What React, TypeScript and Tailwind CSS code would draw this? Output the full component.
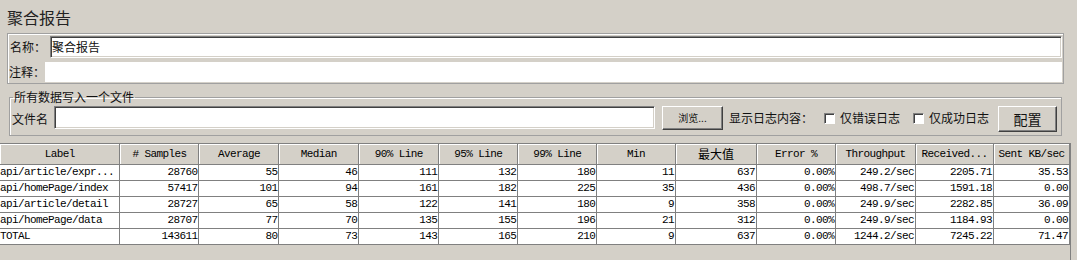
const cols = [
  { name: "Label", w: 120 },
  { name: "# Samples", w: 79 },
  { name: "Average", w: 80 },
  { name: "Median", w: 80 },
  { name: "90% Line", w: 80 },
  { name: "95% Line", w: 79 },
  { name: "99% Line", w: 79 },
  { name: "Min", w: 79 },
  { name: "最大值", w: 81 },
  { name: "Error %", w: 79 },
  { name: "Throughput", w: 80 },
  { name: "Received...", w: 78 },
  { name: "Sent KB/sec", w: 76 },
];

const rows = [
  ["api/article/expr...", "28760", "55", "46", "111", "132", "180", "11", "637", "0.00%", "249.2/sec", "2205.71", "35.53"],
  ["api/homePage/index", "57417", "101", "94", "161", "182", "225", "35", "436", "0.00%", "498.7/sec", "1591.18", "0.00"],
  ["api/article/detail", "28727", "65", "58", "122", "141", "180", "9", "358", "0.00%", "249.9/sec", "2282.85", "36.09"],
  ["api/homePage/data", "28707", "77", "70", "135", "155", "196", "21", "312", "0.00%", "249.9/sec", "1184.93", "0.00"],
  ["TOTAL", "143611", "80", "73", "143", "165", "210", "9", "637", "0.00%", "1244.2/sec", "7245.22", "71.47"],
];

const sunken =
  "border border-[#808080] border-b-white border-r-white bg-white shadow-[inset_1px_1px_0_#404040,inset_-1px_-1px_0_#d4d0c8]";
const raised =
  "border border-white border-b-[#404040] border-r-[#404040] bg-[#d4d0c8] shadow-[inset_-1px_-1px_0_#808080]";

const CheckBox = ({ label }: { label: string }) => (
  <div className="flex items-center">
    <div className="w-[11px] h-[11px] bg-white border border-[#808080] border-b-white border-r-white shadow-[inset_1px_1px_0_#404040]" />
    <span className="ml-[5px]">{label}</span>
  </div>
);

export default function App() {
  return (
    <div className="w-[1077px] h-[260px] overflow-hidden bg-[#d4d0c8] text-[12px] leading-[14px] text-[#111] font-['Noto_Sans_CJK_SC',sans-serif]">
      <div className="h-[33px] pl-[7px] pt-[7px] text-[16px] leading-[20px] text-[#222]">聚合报告</div>

      <div className="ml-[7px] w-[1057px] h-[51px] border border-[#a0a0a0] shadow-[inset_1px_1px_0_#fff] flex flex-col">
        <div className="flex items-center mt-[1px] h-[23px]">
          <span className="w-[42px] shrink-0 whitespace-nowrap pl-[2px]">名称：</span>
          <div className={`${sunken} w-[1012px] h-[22px] flex items-center pl-[1px]`}>聚合报告</div>
        </div>
        <div className="flex items-center mt-[4px] h-[20px]">
          <span className="w-[37px] shrink-0 whitespace-nowrap pl-[1px]">注释：</span>
          <div className="w-[1017px] h-[20px] bg-white" />
        </div>
      </div>

      <fieldset className="ml-[9px] mt-[6px] w-[1053px] h-[46px] border border-[#a0a0a0] shadow-[inset_1px_1px_0_#fff] px-[2px]">
        <legend className="ml-[1px] px-[1px] leading-[14px]">所有数据写入一个文件</legend>
        <div className="flex items-start mt-[2px]">
          <span className="w-[42px] shrink-0 mt-[6px]">文件名</span>
          <div className={`${sunken} w-[601px] h-[23px]`} />
          <button className={`${raised} ml-[7px] w-[61px] h-[24px] text-[10px] leading-[12px]`}>浏览...</button>
          <div className="flex items-center h-[24px] ml-[6px] whitespace-nowrap">
            <span>显示日志内容：</span>
            <div className="ml-[11px]">
              <CheckBox label="仅错误日志" />
            </div>
            <div className="ml-[13px]">
              <CheckBox label="仅成功日志" />
            </div>
          </div>
          <button className={`${raised} ml-[9px] w-[59px] h-[26px] text-[14px] leading-[16px]`}>配置</button>
        </div>
      </fieldset>

      <div className="mt-[7px] w-[1071px] h-[120px] border-t border-r border-[#808080] bg-[#d4d0c8] font-['Liberation_Mono',monospace] text-[11px] tracking-[-0.6px] text-black">
        <table className="table-fixed border-collapse">
          <colgroup>
            {cols.map((c) => (
              <col key={c.name} style={{ width: c.w }} />
            ))}
          </colgroup>
          <thead>
            <tr className="h-[20px]">
              {cols.map((c) => (
                <th
                  key={c.name}
                  className={`p-0 font-normal text-center border-r border-b border-[#808080] shadow-[inset_1px_1px_0_#fff] bg-[#d4d0c8] ${
                    c.name === "最大值" ? "font-['Noto_Sans_CJK_SC',sans-serif] text-[12px] tracking-normal" : ""
                  }`}
                >
                  {c.name}
                </th>
              ))}
            </tr>
          </thead>
          <tbody>
            {rows.map((r) => (
              <tr key={r[0]} className="h-[16px]">
                {r.map((v, i) => (
                  <td
                    key={i}
                    className={`p-0 pr-[1px] leading-[15px] bg-white border-r border-b border-[#808080] whitespace-nowrap overflow-hidden ${
                      i === 0 ? "text-left" : "text-right"
                    }`}
                  >
                    {v}
                  </td>
                ))}
              </tr>
            ))}
          </tbody>
        </table>
      </div>
    </div>
  );
}
